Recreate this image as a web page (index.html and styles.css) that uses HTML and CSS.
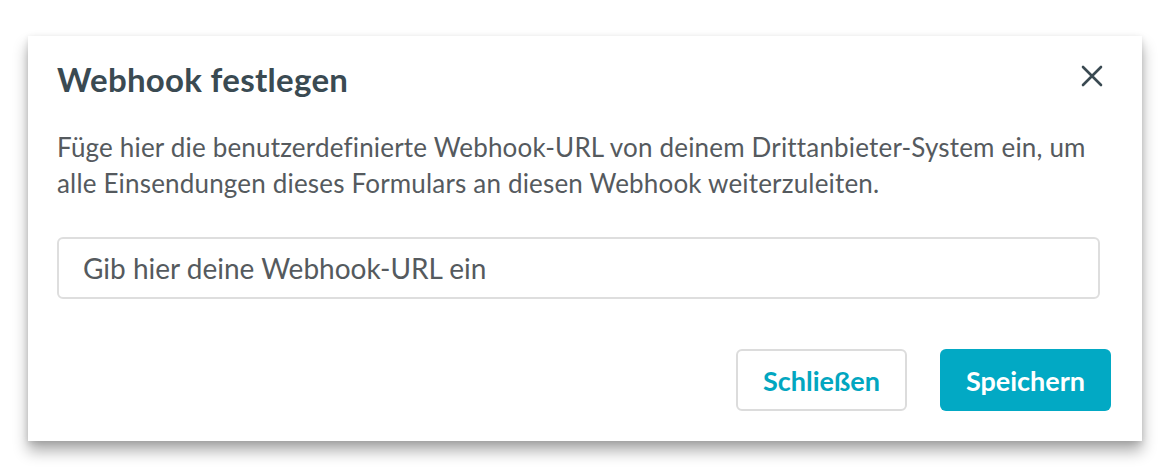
FILE: index.html
```html
<!DOCTYPE html>
<html lang="de">
<head>
  <meta charset="UTF-8">
  <title>Webhook festlegen</title>
  <link rel="stylesheet" href="styles.css">
</head>
<body>
  <div class="dialog">
    <div class="dialog-header">
      <h2 class="dialog-title">Webhook festlegen</h2>
      <button class="close-btn" type="button" aria-label="Schließen">
        <svg width="22" height="22" viewBox="0 0 22 22">
          <path d="M2 2 L20 20 M20 2 L2 20" stroke="#3a4a52" stroke-width="2.6" stroke-linecap="round" fill="none"/>
        </svg>
      </button>
    </div>

    <p class="dialog-text">Füge hier die benutzerdefinierte Webhook-URL von deinem Drittanbieter-System ein, um alle Einsendungen dieses Formulars an diesen Webhook weiterzuleiten.</p>

    <input class="webhook-input" type="text" placeholder="Gib hier deine Webhook-URL ein">

    <div class="dialog-actions">
      <button class="btn btn-secondary" type="button">Schließen</button>
      <button class="btn btn-primary" type="button">Speichern</button>
    </div>
  </div>
</body>
</html>
```

FILE: styles.css
```css
/* ========== PAGE ========== */
body {
  margin: 0;
  padding: 36px 0 30px 28px;
  min-height: 471px;
  box-sizing: border-box;
  background: #ffffff;
  font-family: Lato, "Liberation Sans", sans-serif;
}

/* ========== DIALOG ========== */
.dialog {
  width: 1114px;
  box-sizing: border-box;
  padding: 23px 31px 30px 29px;
  background: #ffffff;
  box-shadow: 0 10px 14px rgba(0, 0, 0, 0.32), 0 2px 6px rgba(0, 0, 0, 0.12);
}

.dialog-header {
  display: flex;
  justify-content: space-between;
  align-items: flex-start;
}

.dialog-title {
  margin: 0;
  font-size: 33px;
  line-height: 40px;
  letter-spacing: 0.3px;
  font-weight: 700;
  color: #3a4a52;
}

.close-btn {
  border: none;
  background: none;
  padding: 0;
  margin: 6px 8px 0 0;
  width: 22px;
  height: 22px;
  cursor: pointer;
}

.dialog-text {
  margin: 30px 0 0;
  font-size: 26px;
  line-height: 36px;
  letter-spacing: 0.18px;
  color: #555a5e;
}

/* ========== INPUT ========== */
.webhook-input {
  display: block;
  width: 1043px;
  height: 62px;
  box-sizing: border-box;
  margin-top: 36px;
  padding: 0 24px;
  border: 2px solid #dedede;
  border-radius: 6px;
  font-family: inherit;
  font-size: 28px;
  color: #444;
}

.webhook-input::placeholder {
  color: #555a5e;
}

/* ========== ACTIONS ========== */
.dialog-actions {
  display: flex;
  justify-content: flex-end;
  gap: 33px;
  margin-top: 50px;
}

.btn {
  height: 62px;
  width: 171px;
  border-radius: 6px;
  font-family: inherit;
  font-size: 27px;
  font-weight: 700;
  cursor: pointer;
}

.btn-secondary {
  border: 2px solid #dcdcdc;
  background: #ffffff;
  color: #02a6c0;
}

.btn-primary {
  border: none;
  background: #02a9c4;
  color: #ffffff;
}
```
